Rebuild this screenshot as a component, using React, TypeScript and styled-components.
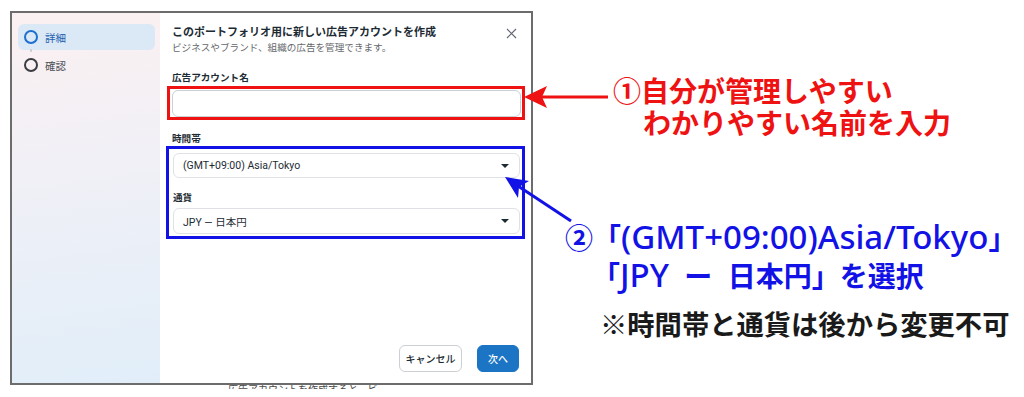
import React from "react";
import styled, { createGlobalStyle } from "styled-components";

const Global = createGlobalStyle`
  html, body { margin: 0; padding: 0; background: #ffffff; }
  body { font-family: Roboto, "Noto Sans CJK JP", sans-serif; -webkit-font-smoothing: antialiased; }
  #root { width: 1024px; height: 397px; }
`;

const Canvas = styled.div`
  position: relative;
  width: 1024px;
  height: 397px;
  overflow: hidden;
  box-sizing: border-box;
  padding: 11px 0 0 10px;
  background: #ffffff;
`;

const Shot = styled.div`
  width: 523px;
  height: 374px;
  box-sizing: border-box;
  border: 2px solid #6c6c6c;
  display: grid;
  grid-template-columns: 148px 1fr;
  background: #ffffff;
`;

const Cutoff = styled.div`
  height: 4px;
  overflow: hidden;
  margin-left: 218px;
  width: 150px;
  font-size: 10px;
  line-height: 10px;
  color: #4a4a4a;
  white-space: nowrap;
`;

const Sidebar = styled.nav`
  background: linear-gradient(172deg, #fbf0f1 0%, #f1f0f6 40%, #e1eef9 100%);
  padding: 11px 5px 0 6px;
  display: flex;
  flex-direction: column;
  gap: 2px;
`;

const Step = styled.div<{ $active?: boolean }>`
  position: relative;
  height: 26px;
  display: flex;
  align-items: center;
  gap: 7px;
  padding-left: 6px;
  border-radius: 6px;
  background: ${(p) => (p.$active ? "#dbe8f6" : "transparent")};
  color: ${(p) => (p.$active ? "#1b5fae" : "#4b4f56")};
  font-size: 10.5px;
`;

const StepDot = styled.span<{ $active?: boolean }>`
  width: 14px;
  height: 14px;
  box-sizing: border-box;
  border-radius: 50%;
  border: 2px solid ${(p) => (p.$active ? "#1d6fd0" : "#3a3d42")};
`;

const Connector = styled.span`
  position: absolute;
  left: 12px;
  top: -3px;
  width: 2px;
  height: 3px;
  border-radius: 1px;
  background: #c8ccd2;
`;

const Main = styled.section`
  display: flex;
  flex-direction: column;
  padding: 12px 12px 11px 12px;
  color: #1c2b33;
`;

const Header = styled.header`
  display: flex;
  justify-content: space-between;
  align-items: flex-start;
`;

const Title = styled.h1`
  margin: 0;
  font-size: 11px;
  font-weight: 700;
  line-height: 16px;
  color: #1c2b33;
`;

const Sub = styled.p`
  margin: 0;
  font-size: 9.6px;
  line-height: 13px;
  color: #65676b;
`;

const Close = styled.button`
  border: 0;
  background: none;
  padding: 0;
  margin: 3px 2px 0 0;
  width: 11px;
  height: 11px;
  display: flex;
`;

const Label = styled.div`
  font-size: 9.6px;
  font-weight: 700;
  line-height: 14px;
  color: #1c2b33;
`;

const Spacer = styled.div<{ $h: number }>`
  height: ${(p) => p.$h}px;
  flex: none;
`;

const RedMark = styled.div`
  margin: 0 -6px 0 -5px;
  border: 3px solid #ee1212;
  padding: 1px 1px 0 2px;
`;

const BlueMark = styled.div`
  margin: 0 -6px 0 -6px;
  border: 3px solid #1212e6;
  padding: 4px 2px 2px 4px;
  display: flex;
  flex-direction: column;
`;

const Input = styled.div`
  height: 27px;
  box-sizing: border-box;
  border: 1px solid #ccd0d5;
  border-radius: 6px;
  background: #fff;
`;

const Select = styled.div<{ $h: number }>`
  height: ${(p) => p.$h}px;
  box-sizing: border-box;
  border: 1px solid #dfe1e5;
  border-radius: 6px;
  background: #fff;
  display: flex;
  align-items: center;
  justify-content: space-between;
  padding: 0 10px 0 9px;
  font-size: 10.5px;
  color: #1c2b33;
`;

const Caret = styled.span`
  width: 0;
  height: 0;
  border-left: 4px solid transparent;
  border-right: 4px solid transparent;
  border-top: 4px solid #1c2b33;
`;

const Footer = styled.footer`
  margin-top: auto;
  display: flex;
  justify-content: flex-end;
  gap: 15px;
`;

const Button = styled.button<{ $primary?: boolean }>`
  height: 27px;
  border-radius: 6px;
  font-family: inherit;
  font-size: 10px;
  font-weight: 500;
  padding: 0;
  width: ${(p) => (p.$primary ? "42px" : "63px")};
  border: 1px solid ${(p) => (p.$primary ? "#1b74c4" : "#ccd0d5")};
  background: ${(p) => (p.$primary ? "#1b74c4" : "#ffffff")};
  color: ${(p) => (p.$primary ? "#ffffff" : "#1c2b33")};
`;

const Overlay = styled.svg`
  position: absolute;
  left: 0;
  top: 0;
  pointer-events: none;
`;

const Note = styled.div<{ $x: number; $y: number; $color: string; $size: number; $lh: number }>`
  position: absolute;
  left: ${(p) => p.$x}px;
  top: ${(p) => p.$y}px;
  color: ${(p) => p.$color};
  font-family: "Noto Sans CJK JP", sans-serif;
  font-weight: 700;
  font-size: ${(p) => p.$size}px;
  line-height: ${(p) => p.$lh}px;
  white-space: nowrap;
`;

const NoteLine = styled.div<{ $indent?: number; $wordGap?: number }>`
  padding-left: ${(p) => p.$indent ?? 0}px;
  word-spacing: ${(p) => p.$wordGap ?? 0}px;
`;

const Latin = styled.span`
  font-family: "Noto Sans", "Noto Sans CJK JP", sans-serif;
  font-weight: 500;
  font-size: 33px;
  line-height: 1;
`;

export default function App() {
  return (
    <Canvas>
      <Global />
      <Shot>
        <Sidebar>
          <Step $active>
            <StepDot $active />
            詳細
          </Step>
          <Step>
            <Connector />
            <StepDot />
            確認
          </Step>
        </Sidebar>
        <Main>
          <Header>
            <div>
              <Title>このポートフォリオ用に新しい広告アカウントを作成</Title>
              <Sub>ビジネスやブランド、組織の広告を管理できます。</Sub>
            </div>
            <Close aria-label="閉じる">
              <svg width="11" height="11" viewBox="0 0 11 11">
                <path d="M1 1 L10 10 M10 1 L1 10" stroke="#606770" strokeWidth="1.1" />
              </svg>
            </Close>
          </Header>
          <Spacer $h={17} />
          <Label>広告アカウント名</Label>
          <Spacer $h={1} />
          <RedMark>
            <Input />
          </RedMark>
          <Spacer $h={12} />
          <Label>時間帯</Label>
          <BlueMark>
            <Select $h={25}>
              (GMT+09:00) Asia/Tokyo
              <Caret />
            </Select>
            <Spacer $h={13} />
            <Label>通貨</Label>
            <Spacer $h={3} />
            <Select $h={26}>
              JPY — 日本円
              <Caret />
            </Select>
          </BlueMark>
          <Footer>
            <Button>キャンセル</Button>
            <Button $primary>次へ</Button>
          </Footer>
        </Main>
      </Shot>
      <Cutoff>広告アカウントを作成すると、ビジネスの広告を</Cutoff>

      <Overlay width="1024" height="397" viewBox="0 0 1024 397">
        <line x1="541" y1="97" x2="608" y2="97" stroke="#ee1212" strokeWidth="3" />
        <polygon points="524,97 547,86 542,97 547,108" fill="#ee1212" />
        <line x1="571" y1="221" x2="518" y2="186" stroke="#1212e6" strokeWidth="3" />
        <polygon points="505,177 529,181 519,187 518,198" fill="#1212e6" />
      </Overlay>

      <Note $x={613} $y={74} $color="#ee1212" $size={28} $lh={32}>
        <NoteLine>①自分が管理しやすい</NoteLine>
        <NoteLine $indent={30}>わかりやすい名前を入力</NoteLine>
      </Note>

      <Note $x={565} $y={218} $color="#1212e6" $size={28} $lh={38}>
        <NoteLine>
          ②「<Latin>(GMT+09:00)Asia/Tokyo</Latin>」
        </NoteLine>
        <NoteLine $indent={27} $wordGap={9}>
          「<Latin>JPY</Latin> ー 日本円」を選択
        </NoteLine>
      </Note>

      <Note $x={600} $y={307} $color="#1a1a1a" $size={27.3} $lh={32}>
        <NoteLine>※時間帯と通貨は後から変更不可</NoteLine>
      </Note>
    </Canvas>
  );
}
